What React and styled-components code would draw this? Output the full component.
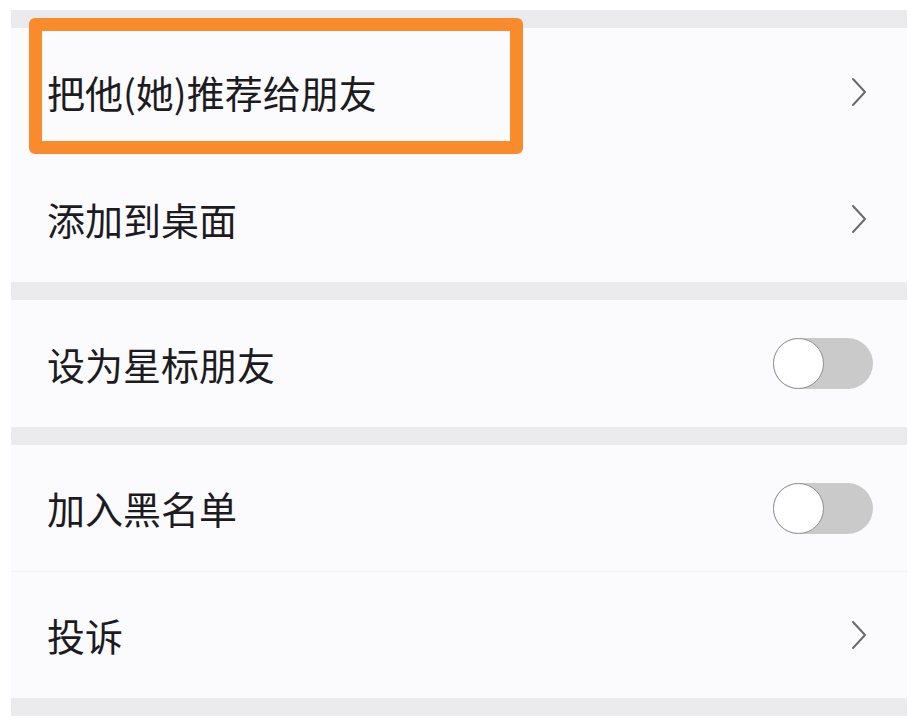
import React from "react";
import styled, { createGlobalStyle } from "styled-components";

const Global = createGlobalStyle`
  html, body { margin: 0; padding: 0; background: #ffffff; }
  body { font-family: "Noto Sans CJK SC", "Noto Sans", sans-serif; }
`;

const Page = styled.div`
  width: 896px;
  padding: 10px 9px 12px 11px;
  background: #ffffff;
`;

const Gap = styled.div`
  height: 18px;
  background: #ebebee;
`;

const Row = styled.div`
  position: relative;
  height: ${(p) => p.$h || 127}px;
  display: flex;
  align-items: center;
  justify-content: space-between;
  padding: 0 ${(p) => (p.$toggle ? 34 : 40)}px 0 36px;
  background: #fbfbfd;
  box-sizing: border-box;
  border-bottom: ${(p) => (p.$divider ? "1px solid #f3f3f7" : "none")};
`;

const Label = styled.span`
  font-size: 38px;
  line-height: 1;
  color: #1d1b22;
`;

const Highlight = styled.div`
  position: absolute;
  left: 18px;
  top: -10px;
  width: 494px;
  height: 136px;
  box-sizing: border-box;
  border: 13px solid #fa8b2c;
  border-radius: 6px;
  pointer-events: none;
`;

const Track = styled.div`
  width: 100px;
  height: 51px;
  border-radius: 26px;
  background: #cacaca;
  display: flex;
  align-items: center;
`;

const Knob = styled.div`
  width: 51px;
  height: 51px;
  box-sizing: border-box;
  border-radius: 50%;
  background: #ffffff;
  border: 1.5px solid #8e8e8e;
`;

const Chevron = () => (
  <svg width="16" height="30" viewBox="0 0 16 30" fill="none">
    <polyline
      points="2,2 14,15 2,28"
      stroke="#6a6a6e"
      strokeWidth="2"
      strokeLinecap="round"
      strokeLinejoin="round"
    />
  </svg>
);

const Toggle = () => (
  <Track>
    <Knob />
  </Track>
);

export default function App() {
  return (
    <>
      <Global />
      <Page>
        <Gap />
        <Row>
          <Label>把他(她)推荐给朋友</Label>
          <Chevron />
          <Highlight />
        </Row>
        <Row>
          <Label>添加到桌面</Label>
          <Chevron />
        </Row>
        <Gap />
        <Row $toggle>
          <Label>设为星标朋友</Label>
          <Toggle />
        </Row>
        <Gap />
        <Row $toggle $divider>
          <Label>加入黑名单</Label>
          <Toggle />
        </Row>
        <Row $h={126}>
          <Label>投诉</Label>
          <Chevron />
        </Row>
        <Gap />
      </Page>
    </>
  );
}
